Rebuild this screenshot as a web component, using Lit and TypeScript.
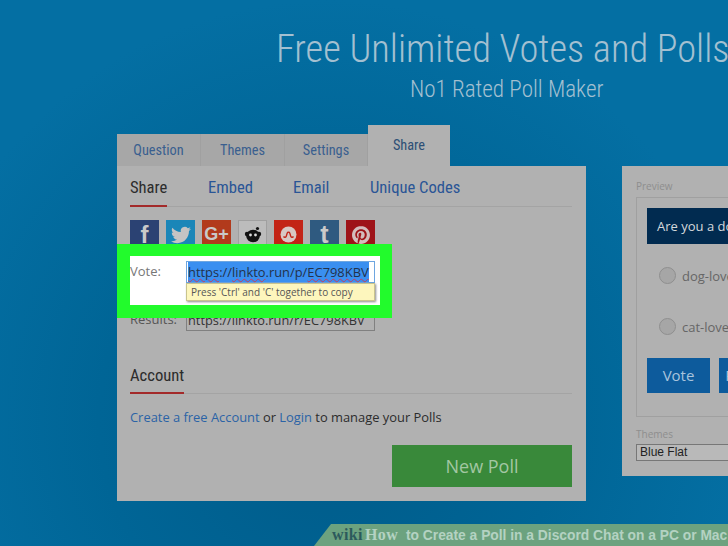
import { LitElement, html, css } from "lit";
import { customElement } from "lit/decorators.js";

@customElement("app-root")
export class AppRoot extends LitElement {
  static styles = css`
    :host { display: block; position: relative; width: 728px; height: 546px; overflow: hidden;
      font-family: "Open Sans", sans-serif;
      background: radial-gradient(ellipse 420px 420px at 330px 420px, #005b89 0%, #006596 55%, #046fa3 100%), #046fa3; }
    .head { height: 125px; padding-left: 276px; box-sizing: border-box; white-space: nowrap; color: #a3c0d1; }
    h1 { margin: 0; padding-top: 29px; font: 300 38.4px/40px Roboto, sans-serif; font-stretch: condensed; }
    h2 { margin: 0; padding: 8px 0 0 134px; font: 300 23.1px/26px Roboto, sans-serif; font-stretch: condensed; }
    .main { display: flex; align-items: flex-start; padding-left: 117px; gap: 36px; }
    .left { width: 469px; flex: none; position: relative; }
    .tabs { display: flex; align-items: flex-end; height: 41px; }
    .tab { height: 32px; background: #a7a7a7; color: #3a5f8f; font: 400 14.3px/32px Roboto, sans-serif; font-stretch: condensed; text-align: center; box-sizing: border-box; border-right: 1px solid #a0a0a0; }
    .tab.on { height: 41px; width: 82px; background: #b1b1b1; border: 0; line-height: 41px; color: #2d4f75; }
    .card { background: #b1b1b1; height: 335px; padding: 0 14px 0 13px; box-sizing: border-box; }
    .sub { display: flex; height: 40px; border-bottom: 1px solid #a4a4a4; font: 400 16.6px/44px Roboto, sans-serif; font-stretch: condensed; color: #2a5596; white-space: nowrap; }
    .sub > span { display: block; height: 40px; box-sizing: border-box; }
    .sub .act { color: #2c2c2c; width: 37px; border-bottom: 2px solid #a32a2a; margin-right: 41px; height: 41px; }
    .icons { display: flex; gap: 7px; padding-top: 13px; height: 29px; }
    .ic { width: 29px; height: 29px; display: flex; align-items: center; justify-content: center; box-sizing: border-box; color: #c9c9c9; font: 700 24px/29px "Liberation Sans", sans-serif; }
    .results { display: flex; margin-top: 63px; color: #555; font-size: 13px; line-height: 15px; height: 19px; }
    .results .lb { width: 56px; }
    .results .box { width: 189px; height: 19px; box-sizing: border-box; border: 1px solid #808080; color: #333; font-size: 12.8px; line-height: 14px; padding: 0 1px; white-space: nowrap; overflow: hidden; }
    .acc { margin-top: 22px; height: 40px; border-bottom: 1px solid #a4a4a4; font: 400 16.6px/46px Roboto, sans-serif; font-stretch: condensed; color: #2c2c2c; }
    .acc > span { display: block; width: 54px; height: 41px; box-sizing: border-box; border-bottom: 2px solid #a32a2a; }
    .line { margin-top: 14px; font-size: 12.9px; line-height: 18px; color: #2c2c2c; }
    .line a { color: #2b63a6; }
    .np { margin: 19px 0 0 auto; width: 180px; height: 42px; background: #39893a; color: #a3c7a3; font-size: 18px; line-height: 42px; text-align: center; }
    .hl { position: absolute; left: 0; top: 119px; width: 275px; height: 74px; box-sizing: border-box; background: #22fb2c; padding: 12px 12px 13px 13px; }
    .hl .in { background: #fff; height: 49px; position: relative; display: flex; color: #777; font-size: 13px; line-height: 30px; }
    .hl .lb { width: 56px; }
    .url { width: 189px; height: 22px; margin-top: 5px; box-sizing: border-box; border: 1px solid #6ea6e0; padding: 0 1px; color: #23324a; font-size: 12.9px; line-height: 20px; white-space: nowrap; }
    .url b { font-weight: 400; background: #3a8ff0; display: inline-block; }
    .url i { font-style: normal; text-decoration: underline wavy #c04060 1px; }
    .tip { position: absolute; left: 56px; top: 27px; width: 189px; height: 18px; box-sizing: border-box; background: #fdf6bd; border: 1px solid #c9c48e; box-shadow: 1px 1px 2px rgba(0,0,0,.45); color: #555; font-size: 10px; line-height: 16px; padding-left: 4px; white-space: nowrap; }
    .right { width: 200px; height: 310px; flex: none; margin-top: 41px; background: #b1b1b1; padding: 13px 0 0 14px; box-sizing: border-box; color: #8e8e8e; font-size: 10px; overflow: hidden; }
    .right .t { line-height: 14px; }
    .pv { width: 200px; height: 220px; margin-top: 4px; box-sizing: border-box; border: 1px solid #a0a0a0; padding: 10px; }
    .q { height: 36px; width: 200px; background: #012b50; color: #d5d9dc; font-size: 13px; line-height: 36px; padding-left: 10px; box-sizing: border-box; white-space: nowrap; }
    .opt { display: flex; align-items: center; gap: 6px; height: 17px; margin-top: 23px; color: #666; font-size: 13px; white-space: nowrap; margin-left: 12px; }
    .opt + .opt { margin-top: 34px; }
    .opt u { width: 17px; height: 17px; border-radius: 50%; box-sizing: border-box; border: 1px solid #8f8f8f; background: #a6a6a6; }
    .btns { display: flex; gap: 9px; margin-top: 23px; }
    .btns div { width: 63px; height: 35px; flex: none; background: #0d5b9c; color: #a9c4dc; font-size: 15px; line-height: 35px; text-align: center; }
    .t2 { margin-top: 10px; line-height: 14px; }
    .sel { width: 200px; height: 17px; margin-top: 3px; box-sizing: border-box; border: 1px solid #777; background: #b9b9b9; color: #222; font: 12px/15px "Liberation Sans", sans-serif; padding-left: 3px; }
    .wh { position: absolute; left: 314px; bottom: 0; width: 414px; height: 22px; background: #6ca27f; clip-path: polygon(17px 0, 100% 0, 100% 100%, 0 100%); white-space: nowrap; padding-left: 18px; box-sizing: border-box; font: 700 13.8px/22px "Liberation Sans", sans-serif; color: #b4d2c2; }
    .wh em { font: 700 16px/22px "Liberation Serif", serif; font-style: normal; color: #2c5a5c; letter-spacing: .4px; margin-right: 2px; }
    .wh s { font: 700 16px/22px "Liberation Serif", serif; color: #b4d2c2; text-decoration: none; letter-spacing: .4px; margin-right: 4px; }
  `;

  render() {
    return html`
      <div class="head"><h1>Free Unlimited Votes and Polls</h1><h2>No1 Rated Poll Maker</h2></div>
      <div class="main">
        <div class="left">
          <div class="tabs">
            <div class="tab" style="width:84px">Question</div>
            <div class="tab" style="width:84px">Themes</div>
            <div class="tab" style="width:83px">Settings</div>
            <div class="tab on">Share</div>
          </div>
          <div class="card">
            <div class="sub"><span class="act">Share</span><span style="width:85px">Embed</span><span style="width:77px">Email</span><span>Unique Codes</span></div>
            <div class="icons">
              <div class="ic" style="background:#2b4273">f</div>
              <div class="ic" style="background:#1a86b8"><svg width="20" height="20" viewBox="0 0 24 24" fill="#c4c4c4"><path d="M23.953 4.57a10 10 0 01-2.825.775 4.958 4.958 0 002.163-2.723c-.951.555-2.005.959-3.127 1.184a4.92 4.92 0 00-8.384 4.482C7.69 8.095 4.067 6.13 1.64 3.162a4.822 4.822 0 00-.666 2.475c0 1.71.87 3.213 2.188 4.096a4.904 4.904 0 01-2.228-.616v.06a4.923 4.923 0 003.946 4.827 4.996 4.996 0 01-2.212.085 4.936 4.936 0 004.604 3.417 9.867 9.867 0 01-6.102 2.105c-.39 0-.779-.023-1.17-.067a13.995 13.995 0 007.557 2.209c9.053 0 13.998-7.496 13.998-13.985 0-.21 0-.42-.015-.63A9.935 9.935 0 0024 4.59z"/></svg></div>
              <div class="ic" style="background:#b23a1c;font-size:18px">G+</div>
              <div class="ic" style="background:#bcbcbc;border:1px solid #a0a0a0"><svg width="18" height="18" viewBox="0 0 18 18"><circle cx="3" cy="8" r="2.2" fill="#111"/><circle cx="15" cy="8" r="2.2" fill="#111"/><circle cx="13.5" cy="2.5" r="1.6" fill="#111"/><ellipse cx="9" cy="10" rx="6.8" ry="6.2" fill="#111"/><circle cx="6.5" cy="9" r="1.4" fill="#ddd"/><circle cx="11.5" cy="9" r="1.4" fill="#ddd"/></svg></div>
              <div class="ic" style="background:#c32416"><svg width="17" height="17" viewBox="0 0 17 17"><circle cx="8.5" cy="8.5" r="8" fill="#d8c8c4"/><path d="M3.5 10.5c1 1.2 2.4 1 2.8-.4l.9-3c.4-1.3 2.2-1.3 2.6 0l.9 3c.4 1.4 1.8 1.6 2.8.4" fill="none" stroke="#c32416" stroke-width="1.4"/></svg></div>
              <div class="ic" style="background:#2f5a80;font-size:25px">t</div>
              <div class="ic" style="background:#9e1318"><svg width="18" height="18" viewBox="0 0 24 24" fill="#d3bcbc"><path d="M12.017 0C5.396 0 .029 5.367.029 11.987c0 5.079 3.158 9.417 7.618 11.162-.105-.949-.199-2.403.041-3.439.219-.937 1.406-5.957 1.406-5.957s-.359-.72-.359-1.781c0-1.663.967-2.911 2.168-2.911 1.024 0 1.518.769 1.518 1.688 0 1.029-.653 2.567-.992 3.992-.285 1.193.6 2.165 1.775 2.165 2.128 0 3.768-2.245 3.768-5.487 0-2.861-2.063-4.869-5.008-4.869-3.41 0-5.409 2.562-5.409 5.199 0 1.033.394 2.143.889 2.741.099.12.112.225.085.345-.09.375-.293 1.199-.334 1.363-.053.225-.172.271-.401.165-1.495-.69-2.433-2.878-2.433-4.646 0-3.776 2.748-7.252 7.92-7.252 4.158 0 7.392 2.967 7.392 6.923 0 4.135-2.607 7.462-6.233 7.462-1.214 0-2.354-.629-2.758-1.379l-.749 2.848c-.269 1.045-1.004 2.352-1.498 3.146 1.123.345 2.306.535 3.55.535 6.607 0 11.985-5.365 11.985-11.987C23.97 5.39 18.592.026 11.985.026L12.017 0z"/></svg></div>
            </div>
            <div class="results"><div class="lb">Results:</div><div class="box">https://linkto.run/r/EC798KBV</div></div>
            <div class="acc"><span>Account</span></div>
            <div class="line"><a>Create a free Account</a> or <a>Login</a> to manage your Polls</div>
            <div class="np">New Poll</div>
          </div>
          <div class="hl">
            <div class="in">
              <div class="lb">Vote:</div>
              <div class="url"><b><i>https</i>://<i>linkto</i>.run/p/<i>EC798KBV</i></b></div>
              <div class="tip">Press 'Ctrl' and 'C' together to copy</div>
            </div>
          </div>
        </div>
        <div class="right">
          <div class="t">Preview</div>
          <div class="pv">
            <div class="q">Are you a dog-lover or a cat-lover?</div>
            <div class="opt"><u></u>dog-lover</div>
            <div class="opt"><u></u>cat-lover</div>
            <div class="btns"><div>Vote</div><div>Results</div></div>
          </div>
          <div class="t2">Themes</div>
          <div class="sel">Blue Flat</div>
        </div>
      </div>
      <div class="wh"><em>wiki</em><s>How</s> to Create a Poll in a Discord Chat on a PC or Mac</div>
    `;
  }
}
